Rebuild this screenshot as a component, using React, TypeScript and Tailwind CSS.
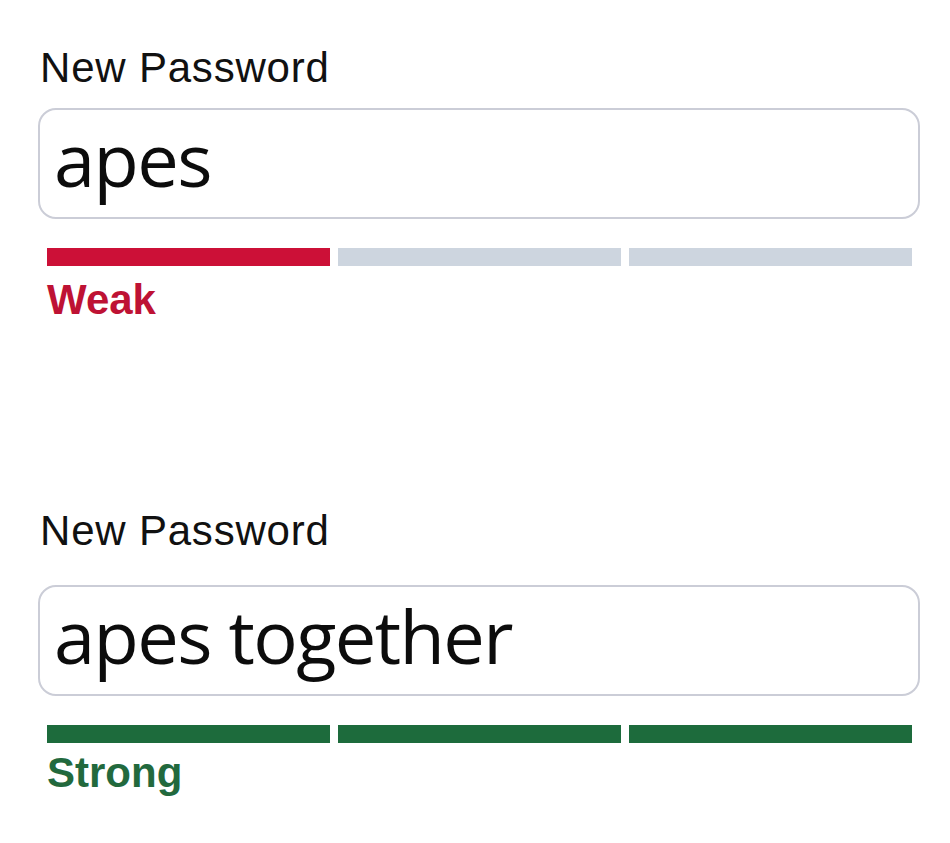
import React from "react";

type Block = {
  value: string;
  level: number;
  label: string;
  color: string;
  textColor: string;
  labelGap: string;
  strengthGap: string;
};

function Bars({ level, color }: { level: number; color: string }) {
  return (
    <div className="mx-[9px] mr-[8px] mt-[29px] flex h-[18px] gap-[8px]">
      {[0, 1, 2].map((i) => (
        <div
          key={i}
          className="h-full flex-1"
          style={{ backgroundColor: i < level ? color : "#cdd5df" }}
        />
      ))}
    </div>
  );
}

function PasswordField({
  value,
  level,
  label,
  color,
  textColor,
  labelGap,
  strengthGap,
}: Block) {
  return (
    <div className="flex flex-col">
      <div className="pl-[2px] font-['Liberation_Sans',Arial,sans-serif] text-[42px] leading-[42px] tracking-[0.8px] text-[#111111]">
        New Password
      </div>
      <div
        className={
          labelGap +
          " h-[111px] rounded-[18px] border-2 border-[#cbcdd7] bg-white pl-[14px] pb-[10px] font-['Open_Sans',sans-serif] text-[74px] leading-[97px] tracking-[-1.6px] text-[#0c0c0c]"
        }
      >
        {value}
      </div>
      <Bars level={level} color={color} />
      <div
        className={
          strengthGap +
          " ml-[9px] font-['Liberation_Sans',Arial,sans-serif] text-[42px] font-bold leading-[42px]"
        }
        style={{ color: textColor }}
      >
        {label}
      </div>
    </div>
  );
}

export default function App() {
  return (
    <div className="min-h-[843px] w-[950px] bg-white pl-[38px] pr-[30px] pt-[47px]">
      <PasswordField
        value="apes"
        level={1}
        label="Weak"
        color="#cc1037"
        textColor="#be1234"
        labelGap="mt-[19px]"
        strengthGap="mt-[13px]"
      />
      <div className="h-[189px]" />
      <PasswordField
        value="apes together"
        level={3}
        label="Strong"
        color="#1d6b3c"
        textColor="#22693d"
        labelGap="mt-[33px]"
        strengthGap="mt-[9px]"
      />
    </div>
  );
}
